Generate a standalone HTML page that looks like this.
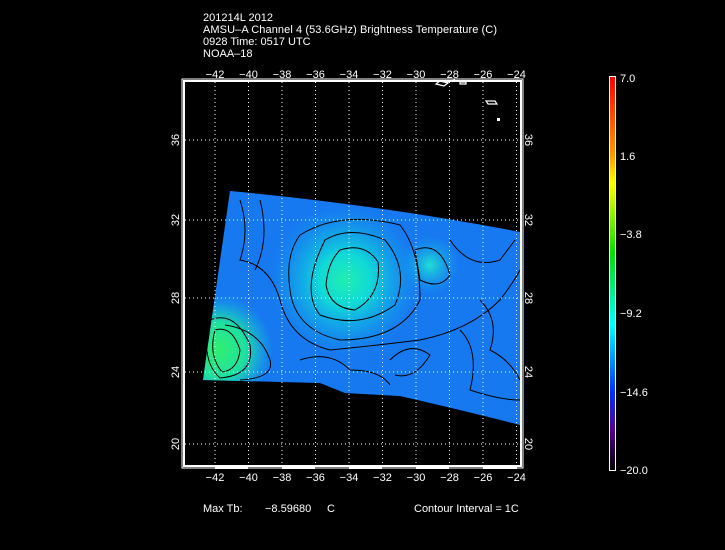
<!DOCTYPE html>
<html><head><meta charset="utf-8"><style>
html,body{margin:0;padding:0;background:#000;width:725px;height:550px;overflow:hidden}
svg{display:block}
text{font-family:"Liberation Sans",sans-serif;font-size:11px;fill:#fff}
</style></head><body>
<svg width="725" height="550" viewBox="0 0 725 550">
<defs>
<clipPath id="c"><path d="M230,191 Q380,205 520,232 L520,425 Q470,412 400,396 L345,393 L320,383 L203,380 Z"/></clipPath>
<radialGradient id="g1" cx="345" cy="280" r="75" gradientUnits="userSpaceOnUse">
<stop offset="0" stop-color="#20f0b0"/><stop offset="0.35" stop-color="#10d8d8"/><stop offset="1" stop-color="#10a0f0" stop-opacity="0"/></radialGradient>
<radialGradient id="g2" cx="218" cy="350" r="55" gradientUnits="userSpaceOnUse">
<stop offset="0" stop-color="#30f070"/><stop offset="0.5" stop-color="#20e0a0"/><stop offset="1" stop-color="#10c0e0" stop-opacity="0"/></radialGradient>
<radialGradient id="g3" cx="430" cy="265" r="30" gradientUnits="userSpaceOnUse">
<stop offset="0" stop-color="#20e0d0"/><stop offset="1" stop-color="#10a0f0" stop-opacity="0"/></radialGradient>
<linearGradient id="cb" x1="0" y1="0" x2="0" y2="1">
<stop offset="0" stop-color="#ff0000"/><stop offset="0.2" stop-color="#ff9900"/><stop offset="0.27" stop-color="#ffff00"/><stop offset="0.45" stop-color="#00e000"/><stop offset="0.63" stop-color="#00ffff"/><stop offset="0.8" stop-color="#0030ff"/><stop offset="0.9" stop-color="#500090"/><stop offset="1" stop-color="#000000"/></linearGradient>
</defs>
<text x="203" y="21">201214L 2012</text>
<text x="203" y="33" textLength="294">AMSU–A Channel 4 (53.6GHz) Brightness Temperature (C)</text>
<text x="203" y="45">0928 Time: 0517 UTC</text>
<text x="203" y="57">NOAA–18</text>
<g clip-path="url(#c)">
<rect x="200" y="190" width="322" height="240" fill="#1460f0"/>
<rect x="200" y="190" width="322" height="240" fill="#1a9af0" opacity="0.45"/>
<circle cx="345" cy="280" r="75" fill="url(#g1)"/>
<circle cx="218" cy="350" r="55" fill="url(#g2)"/>
<circle cx="430" cy="265" r="30" fill="url(#g3)"/>
<g fill="none" stroke="#000" stroke-width="1">
<path d="M325,240 Q350,225 385,240 Q410,270 395,305 Q360,330 320,315 Q300,290 325,240Z"/>
<path d="M340,250 Q365,242 378,262 Q382,295 355,310 Q330,308 326,285 Q328,262 340,250Z"/>
<path d="M300,235 Q340,210 400,225 Q420,250 420,300 Q400,340 340,340 Q295,330 290,290 Q285,255 300,235Z"/>
<path d="M415,250 Q440,240 450,275 Q440,290 420,280Z"/>
<path d="M210,320 Q235,310 250,345 Q255,375 220,378 Q200,360 210,320Z"/>
<path d="M215,330 Q232,325 240,350 Q238,370 222,372 Q208,355 215,330Z"/>
<path d="M225,325 Q260,330 270,360 Q275,378 240,380"/>
<path d="M240,200 Q250,230 240,260 Q270,265 280,300 Q290,340 330,350 Q380,345 420,340 Q470,330 500,300 Q515,280 520,270"/>
<path d="M260,200 Q270,240 255,270"/>
<path d="M450,240 Q470,270 500,260 L515,240"/>
<path d="M390,360 Q410,340 430,355 Q415,380 395,375"/>
<path d="M460,330 Q480,350 470,390 Q500,400 520,400"/>
<path d="M300,360 Q330,350 350,370 Q380,370 390,385"/>
<path d="M480,300 Q500,320 490,350 Q510,360 520,380"/>
</g>
</g>
<g stroke="#fff" stroke-width="1" stroke-dasharray="1,3">
<path d="M215,82V466M248.5,82V466M282,82V466M315.5,82V466M349,82V466M382.5,82V466M416,82V466M449.5,82V466M483,82V466M516.5,82V466"/>
<path d="M185,140H520M185,220H520M185,298H520M185,372H520M185,444H520"/>
</g>
<g fill="none" stroke="#fff" stroke-width="2">
<rect x="184" y="81" width="337" height="385"/>
</g>
<rect x="182" y="79" width="341" height="389" fill="none" stroke="#fff" stroke-width="1"/>
<g fill="#fff">
<rect x="215" y="465" width="33" height="4"/><rect x="282" y="465" width="33" height="4"/><rect x="349" y="465" width="33" height="4"/><rect x="416" y="465" width="33" height="4"/><rect x="483" y="465" width="34" height="4"/>
</g>
<g text-anchor="middle">
<text x="215" y="78">−42</text><text x="248.5" y="78">−40</text><text x="282" y="78">−38</text><text x="315.5" y="78">−36</text><text x="349" y="78">−34</text><text x="382.5" y="78">−32</text><text x="416" y="78">−30</text><text x="449.5" y="78">−28</text><text x="483" y="78">−26</text><text x="516.5" y="78">−24</text>
<text x="215" y="481">−42</text><text x="248.5" y="481">−40</text><text x="282" y="481">−38</text><text x="315.5" y="481">−36</text><text x="349" y="481">−34</text><text x="382.5" y="481">−32</text><text x="416" y="481">−30</text><text x="449.5" y="481">−28</text><text x="483" y="481">−26</text><text x="516.5" y="481">−24</text>
</g>
<g text-anchor="middle">
<text transform="translate(179,140) rotate(-90)">36</text>
<text transform="translate(179,220) rotate(-90)">32</text>
<text transform="translate(179,298) rotate(-90)">28</text>
<text transform="translate(179,372) rotate(-90)">24</text>
<text transform="translate(179,444) rotate(-90)">20</text>
<text transform="translate(525,140) rotate(90)">36</text>
<text transform="translate(525,220) rotate(90)">32</text>
<text transform="translate(525,298) rotate(90)">28</text>
<text transform="translate(525,372) rotate(90)">24</text>
<text transform="translate(525,444) rotate(90)">20</text>
</g>
<g fill="none" stroke="#fff" stroke-width="1.2">
<path d="M436,84 L444,86 L448,83 L440,81Z"/><path d="M447,82 L455,80"/><path d="M460,82 L466,82 L466,84 L460,84Z"/><path d="M486,101 L495,101 L497,104 L488,104Z"/>
</g>
<rect x="497" y="118" width="3" height="3" fill="#fff"/>
<rect x="610" y="77" width="5" height="393" fill="url(#cb)"/>
<rect x="609.5" y="76.5" width="6" height="394" fill="none" stroke="#fff" stroke-width="1"/>
<text x="620" y="82">7.0</text>
<text x="620" y="160">1.6</text>
<text x="620" y="238">−3.8</text>
<text x="620" y="317">−9.2</text>
<text x="620" y="396">−14.6</text>
<text x="620" y="474">−20.0</text>
<text x="203" y="512">Max Tb:</text>
<text x="265" y="512">−8.59680</text>
<text x="327" y="512">C</text>
<text x="414" y="512">Contour Interval = 1C</text>
</svg>
</body></html>
